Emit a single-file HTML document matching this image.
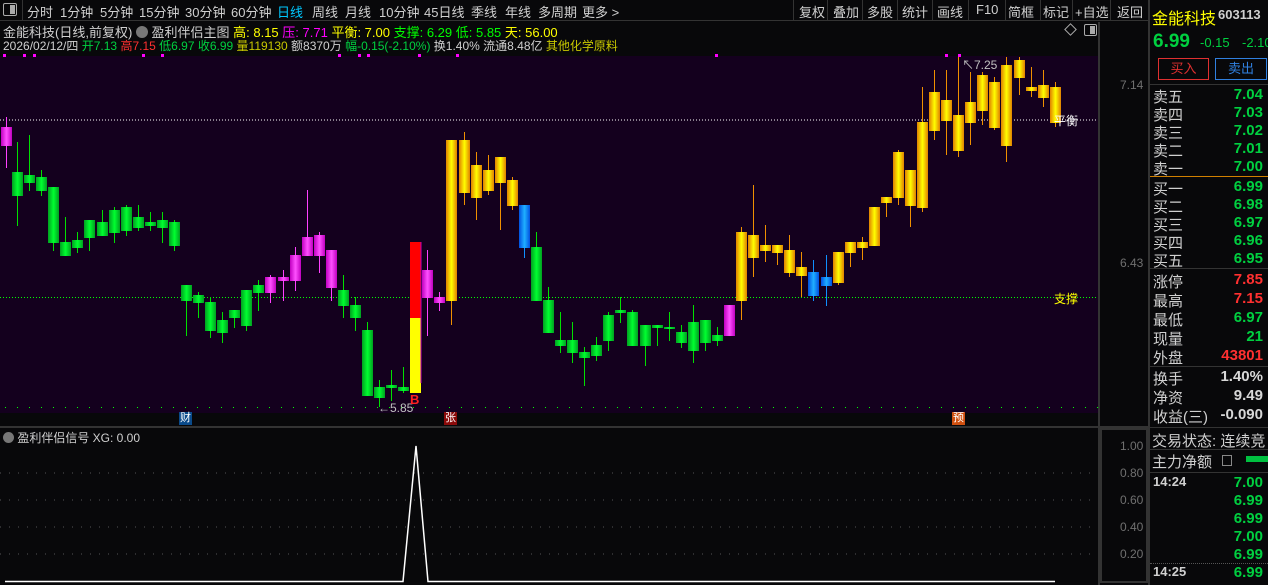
<!DOCTYPE html>
<html><head><meta charset="utf-8">
<style>
*{margin:0;padding:0;box-sizing:border-box}
body{width:1268px;height:585px;background:#08080a;overflow:hidden;position:relative;font-family:"Liberation Sans","Noto Sans CJK SC",sans-serif;color:#c8c8c8}
.a{position:absolute;white-space:nowrap}
.tb{position:absolute;top:0;left:0;width:1148px;height:21px;border-bottom:1px solid #333;font-size:13px}
.tb span{position:absolute;top:2px;color:#d0d0d0}
.sep{position:absolute;top:0;width:1px;height:20px;background:#333}
.rp{position:absolute;left:1148px;top:0;width:120px;height:585px;border-left:2px solid #333;font-size:15px}
.row{position:absolute;left:3px;width:114px;height:19px}
.row .l{position:absolute;left:0;color:#d0d0d0}
.row .r{position:absolute;right:4px;font-weight:bold}
.g{color:#00d040}.rd{color:#ff3030}.w{color:#d8d8d8}
</style></head><body>
<div class="tb">
<div class="a" style="left:3px;top:3px;width:14px;height:13px;border:1px solid #aaa;border-radius:2px"><div style="position:absolute;right:1px;top:1px;width:5px;height:9px;background:#aaa"></div></div>
<div class="sep" style="left:22px"></div>
<span style="left:27px">分时</span><span style="left:60px">1分钟</span><span style="left:100px">5分钟</span><span style="left:139px">15分钟</span><span style="left:185px">30分钟</span><span style="left:231px">60分钟</span><span style="left:277px;color:#00c8ff">日线</span><span style="left:312px">周线</span><span style="left:345px">月线</span><span style="left:379px">10分钟</span><span style="left:424px">45日线</span><span style="left:471px">季线</span><span style="left:505px">年线</span><span style="left:538px">多周期</span><span style="left:582px">更多 ></span>
<div class="sep" style="left:793px"></div><span style="left:799px">复权</span>
<div class="sep" style="left:827px"></div><span style="left:833px">叠加</span>
<div class="sep" style="left:862px"></div><span style="left:867px">多股</span>
<div class="sep" style="left:897px"></div><span style="left:902px">统计</span>
<div class="sep" style="left:932px"></div><span style="left:937px">画线</span>
<div class="sep" style="left:968px"></div><span style="left:976px">F10</span>
<div class="sep" style="left:1005px"></div><span style="left:1008px">简框</span>
<div class="sep" style="left:1040px"></div><span style="left:1043px">标记</span>
<div class="sep" style="left:1072px"></div><span style="left:1075px">+自选</span>
<div class="sep" style="left:1110px"></div><span style="left:1117px">返回</span>
</div>
<div class="a" style="left:3px;top:22px;font-size:13px;color:#d0d0d0">金能科技(日线,前复权) <span style="display:inline-block;width:12px;height:12px;border-radius:6px;background:#777;vertical-align:-1px"></span> 盈利伴侣主图 <span style="color:#ffff00">高: 8.15</span> <span style="color:#ff00ff">压: 7.71</span> <span style="color:#ffff00">平衡: 7.00</span> <span style="color:#00ff00">支撑: 6.29</span> <span style="color:#00ff00">低: 5.85</span> <span style="color:#ffff00">天: 56.00</span></div>
<div class="a" style="left:3px;top:37px;font-size:12px;color:#d0d0d0">2026/02/12/四 <span class="g">开7.13</span> <span class="rd">高7.15</span> <span class="g">低6.97</span> <span class="g">收6.99</span> <span style="color:#c8c800">量119130</span> 额8370万 <span class="g">幅-0.15(-2.10%)</span> 换1.40% 流通8.48亿 <span style="color:#c8c800">其他化学原料</span></div>
<div class="a" style="left:1066px;top:25px;width:9px;height:9px;border:1px solid #aaa;transform:rotate(45deg)"></div>
<div class="a" style="left:1084px;top:24px;width:13px;height:12px;border:1px solid #aaa;border-radius:2px"><div style="position:absolute;right:1px;top:1px;width:5px;height:8px;background:#aaa"></div></div>
<svg class="a" style="left:0;top:0" width="1148" height="585" id="s"></svg>
<div class="a" style="left:1098px;top:22px;width:2px;height:563px;background:#333"></div>
<div class="a" style="left:0;top:426px;width:1148px;height:2px;background:#333"></div>
<div class="a" style="left:1100px;top:428px;width:48px;height:155px;border:2px solid #333"></div>
<div class="a" style="left:1120px;top:78px;font-size:12px;color:#707070">7.14</div>
<div class="a" style="left:1120px;top:256px;font-size:12px;color:#707070">6.43</div>
<div class="a" style="left:1120px;top:439px;font-size:12px;color:#707070">1.00</div>
<div class="a" style="left:1120px;top:466px;font-size:12px;color:#707070">0.80</div>
<div class="a" style="left:1120px;top:493px;font-size:12px;color:#707070">0.60</div>
<div class="a" style="left:1120px;top:520px;font-size:12px;color:#707070">0.40</div>
<div class="a" style="left:1120px;top:547px;font-size:12px;color:#707070">0.20</div>
<div class="a" style="left:3px;top:429px;font-size:12px;color:#d0d0d0"><span style="display:inline-block;width:11px;height:11px;border-radius:6px;background:#777;vertical-align:-1px"></span> 盈利伴侣信号 XG: 0.00</div>
<div class="a" style="left:1054px;top:112px;font-size:12px;color:#fff">平衡</div>
<div class="a" style="left:1054px;top:290px;font-size:12px;color:#ffff00">支撑</div>
<div class="a" style="left:962px;top:56px;font-size:12px;color:#c0c0c0">↖7.25</div>
<div class="a" style="left:378px;top:401px;font-size:12px;color:#c0c0c0">←5.85</div>
<div class="a" style="left:410px;top:392px;font-size:13px;color:#ff2020;font-weight:bold">B</div>
<div class="a" style="left:179px;top:412px;width:13px;height:13px;background:#0a4a8a;color:#fff;font-size:11px;line-height:13px;text-align:center">财</div>
<div class="a" style="left:444px;top:412px;width:13px;height:13px;background:#8a0a0a;color:#fff;font-size:11px;line-height:13px;text-align:center">张</div>
<div class="a" style="left:952px;top:412px;width:13px;height:13px;background:#d05010;color:#fff;font-size:11px;line-height:13px;text-align:center">预</div>
<div class="rp">
<div class="a" style="left:2px;top:5px;color:#ffff00;font-size:16px">金能科技</div>
<div class="a" style="left:68px;top:7px;color:#d0d0d0;font-size:13px;font-weight:bold">603113</div>
<div class="a" style="left:3px;top:31px;color:#00d040;font-size:19px;font-weight:bold">6.99</div>
<div class="a" style="left:50px;top:35px;color:#00d040;font-size:13px">-0.15</div>
<div class="a" style="left:92px;top:35px;color:#00d040;font-size:13px">-2.10</div>
<div class="a" style="left:8px;top:58px;width:51px;height:22px;border:1px solid #e03030;color:#e03030;font-size:13px;text-align:center;line-height:20px">买入</div>
<div class="a" style="left:65px;top:58px;width:52px;height:22px;border:1px solid #3080e0;color:#3080e0;font-size:13px;text-align:center;line-height:20px">卖出</div>
<div class="a" style="left:0;top:84px;width:120px;height:1px;background:#333"></div>
<div class="row" style="top:86px"><span class="l">卖五</span><span class="r g">7.04</span></div>
<div class="row" style="top:104px"><span class="l">卖四</span><span class="r g">7.03</span></div>
<div class="row" style="top:122px"><span class="l">卖三</span><span class="r g">7.02</span></div>
<div class="row" style="top:140px"><span class="l">卖二</span><span class="r g">7.01</span></div>
<div class="row" style="top:158px"><span class="l">卖一</span><span class="r g">7.00</span></div>
<div class="a" style="left:0;top:176px;width:120px;height:1px;background:#d08000"></div>
<div class="row" style="top:178px"><span class="l">买一</span><span class="r g">6.99</span></div>
<div class="row" style="top:196px"><span class="l">买二</span><span class="r g">6.98</span></div>
<div class="row" style="top:214px"><span class="l">买三</span><span class="r g">6.97</span></div>
<div class="row" style="top:232px"><span class="l">买四</span><span class="r g">6.96</span></div>
<div class="row" style="top:250px"><span class="l">买五</span><span class="r g">6.95</span></div>
<div class="a" style="left:0;top:268px;width:120px;height:1px;background:#333"></div>
<div class="row" style="top:271px"><span class="l">涨停</span><span class="r rd">7.85</span></div>
<div class="row" style="top:290px"><span class="l">最高</span><span class="r rd">7.15</span></div>
<div class="row" style="top:309px"><span class="l">最低</span><span class="r g">6.97</span></div>
<div class="row" style="top:328px"><span class="l">现量</span><span class="r g">21</span></div>
<div class="row" style="top:347px"><span class="l">外盘</span><span class="r rd">43801</span></div>
<div class="a" style="left:0;top:366px;width:120px;height:1px;background:#333"></div>
<div class="row" style="top:368px"><span class="l">换手</span><span class="r w">1.40%</span></div>
<div class="row" style="top:387px"><span class="l">净资</span><span class="r w">9.49</span></div>
<div class="row" style="top:406px"><span class="l">收益(三)</span><span class="r w">-0.090</span></div>
<div class="a" style="left:0;top:427px;width:120px;height:1px;background:#333"></div>
<div class="a" style="left:2px;top:430px;color:#d0d0d0">交易状态: 连续竞</div>
<div class="a" style="left:0;top:449px;width:120px;height:1px;background:#333"></div>
<div class="a" style="left:2px;top:451px;color:#d0d0d0">主力净额</div>
<div class="a" style="left:72px;top:455px;width:10px;height:11px;border:1px solid #888"></div>
<div class="a" style="left:96px;top:456px;width:24px;height:6px;background:#00c040"></div>
<div class="a" style="left:0;top:472px;width:120px;height:1px;background:#333"></div>
<div class="row" style="top:474px"><span class="l w" style="font-size:13px;font-weight:bold">14:24</span><span class="r g">7.00</span></div>
<div class="row" style="top:492px"><span class="r g">6.99</span></div>
<div class="row" style="top:510px"><span class="r g">6.99</span></div>
<div class="row" style="top:528px"><span class="r g">7.00</span></div>
<div class="row" style="top:546px"><span class="r g">6.99</span></div>
<div class="a" style="left:0;top:563px;width:120px;height:1px;border-top:1px dotted #555"></div>
<div class="row" style="top:564px"><span class="l w" style="font-size:13px;font-weight:bold">14:25</span><span class="r g">6.99</span></div>
</div>
<script>
var d=[[6,127,146,117,168,'m'],[17,172,196,142,226,'g'],[29,175,183,135,191,'g'],[41,177,191,170,196,'g'],[53,187,243,187,251,'g'],[65,242,256,217,256,'g'],[77,240,248,232,253,'g'],[89,220,238,220,251,'g'],[102,222,236,210,236,'g'],[114,210,233,207,243,'g'],[126,207,231,205,236,'g'],[138,217,228,205,231,'g'],[150,222,226,212,231,'g'],[162,220,228,212,243,'g'],[174,222,246,220,251,'g'],[186,285,301,285,336,'g'],[198,295,303,292,318,'g'],[210,302,331,297,338,'g'],[222,320,333,312,343,'g'],[234,310,318,310,328,'g'],[246,290,326,290,331,'g'],[258,285,293,280,311,'g'],[270,277,293,275,303,'m'],[283,277,281,270,301,'m'],[295,255,281,247,291,'m'],[307,237,256,190,256,'m'],[319,235,256,232,273,'m'],[331,250,288,250,301,'m'],[343,290,306,275,318,'g'],[355,305,318,297,331,'g'],[367,330,396,322,396,'g'],[379,387,398,380,407,'g'],[391,385,388,370,401,'g'],[403,387,391,367,393,'g'],[415,0,0,0,0,'B'],[427,270,298,250,336,'m'],[439,297,303,292,311,'m'],[451,140,301,140,325,'y'],[464,140,193,132,205,'y'],[476,165,198,152,220,'y'],[488,170,191,155,195,'y'],[500,157,183,157,230,'y'],[512,180,206,177,210,'y'],[524,205,248,205,258,'b'],[536,247,301,232,301,'g'],[548,300,333,287,333,'g'],[560,340,346,312,353,'g'],[572,340,353,322,363,'g'],[584,352,358,347,386,'g'],[596,345,356,337,361,'g'],[608,315,341,312,351,'g'],[620,310,313,297,323,'g'],[632,312,346,310,346,'g'],[645,325,346,325,366,'g'],[657,325,328,325,346,'g'],[669,327,328,312,341,'g'],[681,332,343,325,348,'g'],[693,322,351,305,363,'g'],[705,320,343,320,351,'g'],[717,335,341,327,346,'g'],[729,305,336,305,336,'m'],[741,232,301,227,320,'y'],[753,235,258,185,277,'y'],[765,245,251,225,262,'y'],[777,245,253,245,265,'y'],[789,250,273,235,277,'y'],[801,267,276,252,297,'y'],[813,272,296,260,301,'b'],[826,277,286,255,306,'b'],[838,252,283,252,285,'y'],[850,242,253,242,267,'y'],[862,242,248,237,260,'y'],[874,207,246,207,246,'y'],[886,197,203,197,217,'y'],[898,152,198,150,205,'y'],[910,170,206,170,227,'y'],[922,122,208,87,212,'y'],[934,92,131,70,140,'y'],[946,100,121,70,155,'y'],[958,115,151,57,157,'y'],[970,102,123,72,145,'y'],[982,75,111,72,125,'y'],[994,82,128,77,130,'y'],[1006,65,146,57,162,'y'],[1019,60,78,57,95,'y'],[1031,87,91,67,97,'y'],[1043,85,98,70,107,'y'],[1055,87,123,82,127,'y']];
var c={g:['#00ff30','#00a020','#00e000'],m:['#ff50ff','#c000c0','#ff40ff'],y:['#ffff00','#e08000','#f09000'],b:['#20b0ff','#0050e0','#1090ff']};
var h='<defs>';
for(var k in c){h+='<linearGradient id="G'+k+'"><stop offset="0" stop-color="'+c[k][1]+'"/><stop offset=".5" stop-color="'+c[k][0]+'"/><stop offset="1" stop-color="'+c[k][1]+'"/></linearGradient>';}
h+='</defs><rect x="0" y="56" width="1098" height="357" fill="#14001e"/>';
h+='<line x1="0" y1="120" x2="1098" y2="120" stroke="#fff" stroke-dasharray="1 2"/>';
h+='<line x1="0" y1="297.5" x2="1098" y2="297.5" stroke="#00ff00" stroke-dasharray="1 2"/>';
for(var x=5;x<1098;x+=12)h+='<rect x="'+x+'" y="407" width="1" height="1" fill="#00ff00"/>';
[3,23,33,142,161,338,358,367,418,456,715,945,958].forEach(function(x){h+='<rect x="'+x+'" y="54" width="3" height="3" fill="#ff00ff"/>';});
d.forEach(function(a){var x=a[0];
if(a[5]=='B'){h+='<rect x="410" y="242" width="11" height="76" fill="#ff0000"/><rect x="410" y="318" width="11" height="75" fill="#ffff00"/><line x1="421" y1="242" x2="421" y2="383" stroke="#c000c0"/>';return;}
var col=c[a[5]];
h+='<line x1="'+(x+.5)+'" y1="'+a[3]+'" x2="'+(x+.5)+'" y2="'+a[4]+'" stroke="'+col[2]+'"/>';
h+='<rect x="'+(x-5)+'" y="'+a[1]+'" width="11" height="'+Math.max(2,a[2]-a[1])+'" fill="url(#G'+a[5]+')"/>';});
[473,500,527,554].forEach(function(y){h+='<line x1="0" y1="'+y+'" x2="1098" y2="'+y+'" stroke="#555" stroke-dasharray="1 8"/>';});
h+='<polyline points="5,581.5 403,581.5 416,446 428,581.5 1055,581.5" fill="none" stroke="#fff" stroke-width="1.5"/>';
document.getElementById('s').innerHTML=h;
</script>
</body></html>
